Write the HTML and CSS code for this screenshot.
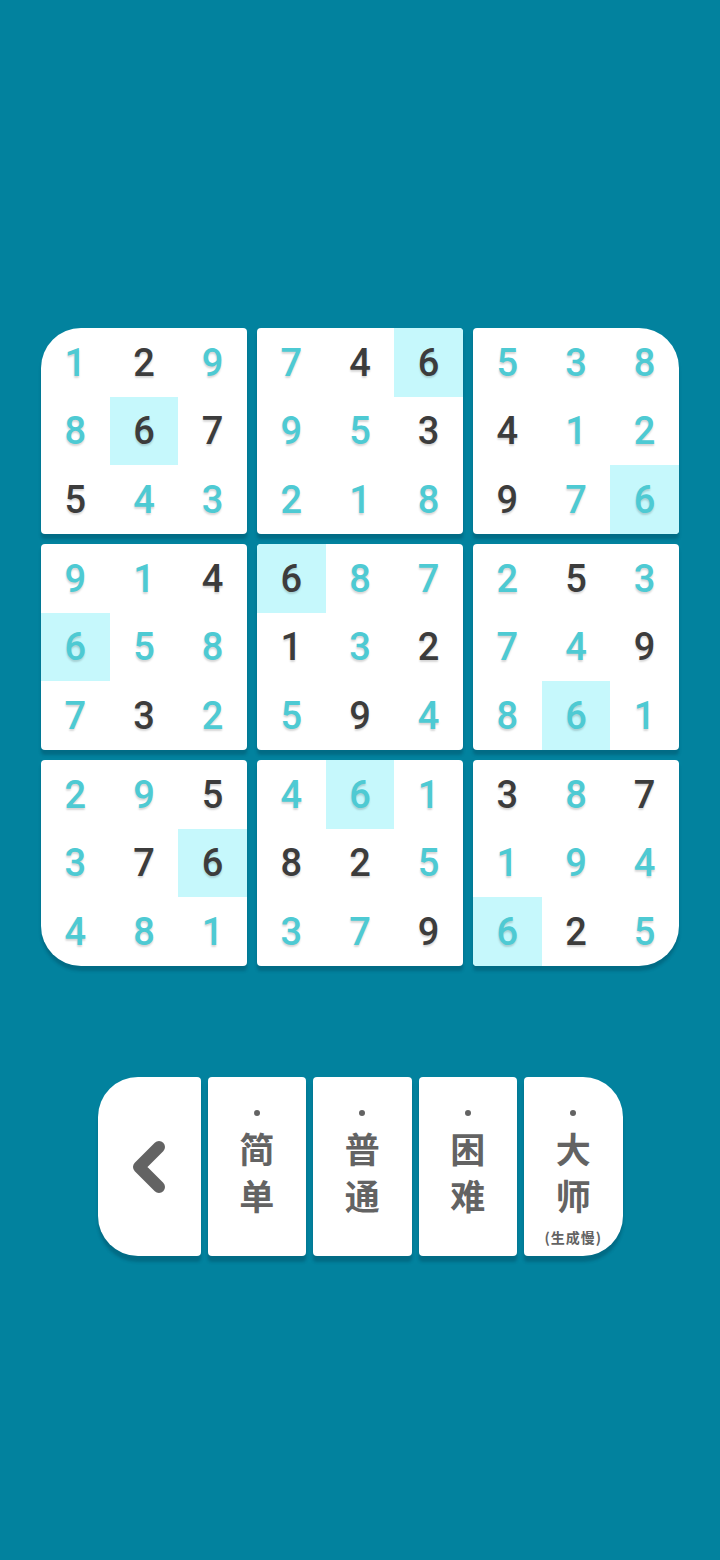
FILE: index.html
```html
<!DOCTYPE html>
<html lang="zh">
<head>
<meta charset="utf-8">
<title>数独</title>
<link rel="stylesheet" href="styles.css">
</head>
<body>
<main class="screen">
  <section class="board">
    <div class="block b-tl">
      <div class="c t">1</div><div class="c">2</div><div class="c t">9</div>
      <div class="c t">8</div><div class="c h">6</div><div class="c">7</div>
      <div class="c">5</div><div class="c t">4</div><div class="c t">3</div>
    </div>
    <div class="block">
      <div class="c t">7</div><div class="c">4</div><div class="c h">6</div>
      <div class="c t">9</div><div class="c t">5</div><div class="c">3</div>
      <div class="c t">2</div><div class="c t">1</div><div class="c t">8</div>
    </div>
    <div class="block b-tr">
      <div class="c t">5</div><div class="c t">3</div><div class="c t">8</div>
      <div class="c">4</div><div class="c t">1</div><div class="c t">2</div>
      <div class="c">9</div><div class="c t">7</div><div class="c t h">6</div>
    </div>
    <div class="block">
      <div class="c t">9</div><div class="c t">1</div><div class="c">4</div>
      <div class="c t h">6</div><div class="c t">5</div><div class="c t">8</div>
      <div class="c t">7</div><div class="c">3</div><div class="c t">2</div>
    </div>
    <div class="block">
      <div class="c h">6</div><div class="c t">8</div><div class="c t">7</div>
      <div class="c">1</div><div class="c t">3</div><div class="c">2</div>
      <div class="c t">5</div><div class="c">9</div><div class="c t">4</div>
    </div>
    <div class="block">
      <div class="c t">2</div><div class="c">5</div><div class="c t">3</div>
      <div class="c t">7</div><div class="c t">4</div><div class="c">9</div>
      <div class="c t">8</div><div class="c t h">6</div><div class="c t">1</div>
    </div>
    <div class="block b-bl">
      <div class="c t">2</div><div class="c t">9</div><div class="c">5</div>
      <div class="c t">3</div><div class="c">7</div><div class="c h">6</div>
      <div class="c t">4</div><div class="c t">8</div><div class="c t">1</div>
    </div>
    <div class="block">
      <div class="c t">4</div><div class="c t h">6</div><div class="c t">1</div>
      <div class="c">8</div><div class="c">2</div><div class="c t">5</div>
      <div class="c t">3</div><div class="c t">7</div><div class="c">9</div>
    </div>
    <div class="block b-br">
      <div class="c">3</div><div class="c t">8</div><div class="c">7</div>
      <div class="c t">1</div><div class="c t">9</div><div class="c t">4</div>
      <div class="c t h">6</div><div class="c">2</div><div class="c t">5</div>
    </div>
  </section>

  <nav class="levels">
    <button class="btn back" aria-label="返回">
      <svg class="chev" width="40" height="60" viewBox="0 0 40 60">
        <path d="M30 10 L10 30 L30 50" fill="none" stroke="#636363" stroke-width="12" stroke-linecap="round" stroke-linejoin="round"/>
      </svg>
    </button>
    <button class="btn lvl"><span class="dot"></span><span class="word">简<br>单</span></button>
    <button class="btn lvl"><span class="dot"></span><span class="word">普<br>通</span></button>
    <button class="btn lvl"><span class="dot"></span><span class="word">困<br>难</span></button>
    <button class="btn lvl last"><span class="dot"></span><span class="word">大<br>师</span><span class="note">(生成慢)</span></button>
  </nav>
</main>
</body>
</html>
```

FILE: styles.css
```css
* { box-sizing: border-box; }

html, body {
  margin: 0;
  padding: 0;
  background: #02829e;
}

.screen {
  width: 720px;
  height: 1560px;
  display: flex;
  flex-direction: column;
  align-items: center;
  padding-top: 328px;
}

.board {
  display: grid;
  grid-template-columns: repeat(3, 206px);
  grid-template-rows: repeat(3, 206px);
  gap: 10px;
}

.block {
  background: #ffffff;
  border-radius: 4px;
  display: grid;
  grid-template-columns: repeat(3, 1fr);
  grid-template-rows: repeat(3, 1fr);
  overflow: hidden;
  box-shadow: 0 5px 3px rgba(0, 40, 60, 0.25);
}

.b-tl { border-top-left-radius: 40px; }
.b-tr { border-top-right-radius: 40px; }
.b-bl { border-bottom-left-radius: 40px; }
.b-br { border-bottom-right-radius: 40px; }

.c {
  display: flex;
  align-items: center;
  justify-content: center;
  font-family: Roboto, "Noto Sans", sans-serif;
  font-weight: 500;
  font-size: 38px;
  color: #3c3c3c;
  text-shadow: 0 2px 2px rgba(0, 0, 0, 0.16);
  padding-top: 1px;
}

.c.t { color: #4ecad3; }
.c.h { background: #c6f8fc; }

.levels {
  margin-top: 111px;
  display: flex;
  gap: 7px;
  width: 525px;
  height: 179px;
}

.btn {
  flex: 1;
  border: none;
  margin: 0;
  padding: 0;
  background: #ffffff;
  border-radius: 4px;
  box-shadow: 0 6px 3px rgba(0, 40, 60, 0.25);
  display: flex;
  flex-direction: column;
  align-items: center;
  font-family: "Noto Sans CJK SC", sans-serif;
  color: #636363;
}

.back {
  justify-content: center;
  border-top-left-radius: 40px;
  border-bottom-left-radius: 40px;
  flex: 0 0 103px;
}

.last {
  border-top-right-radius: 40px;
  border-bottom-right-radius: 40px;
}

.dot {
  width: 6px;
  height: 6px;
  border-radius: 50%;
  background: #636363;
  margin-top: 33px;
}

.word {
  margin-top: 8px;
  font-size: 35px;
  font-weight: 700;
  line-height: 47px;
  text-align: center;
}

.note {
  margin-top: 10px;
  font-size: 14px;
  font-weight: 700;
  line-height: 18px;
  letter-spacing: 1px;
}
```
